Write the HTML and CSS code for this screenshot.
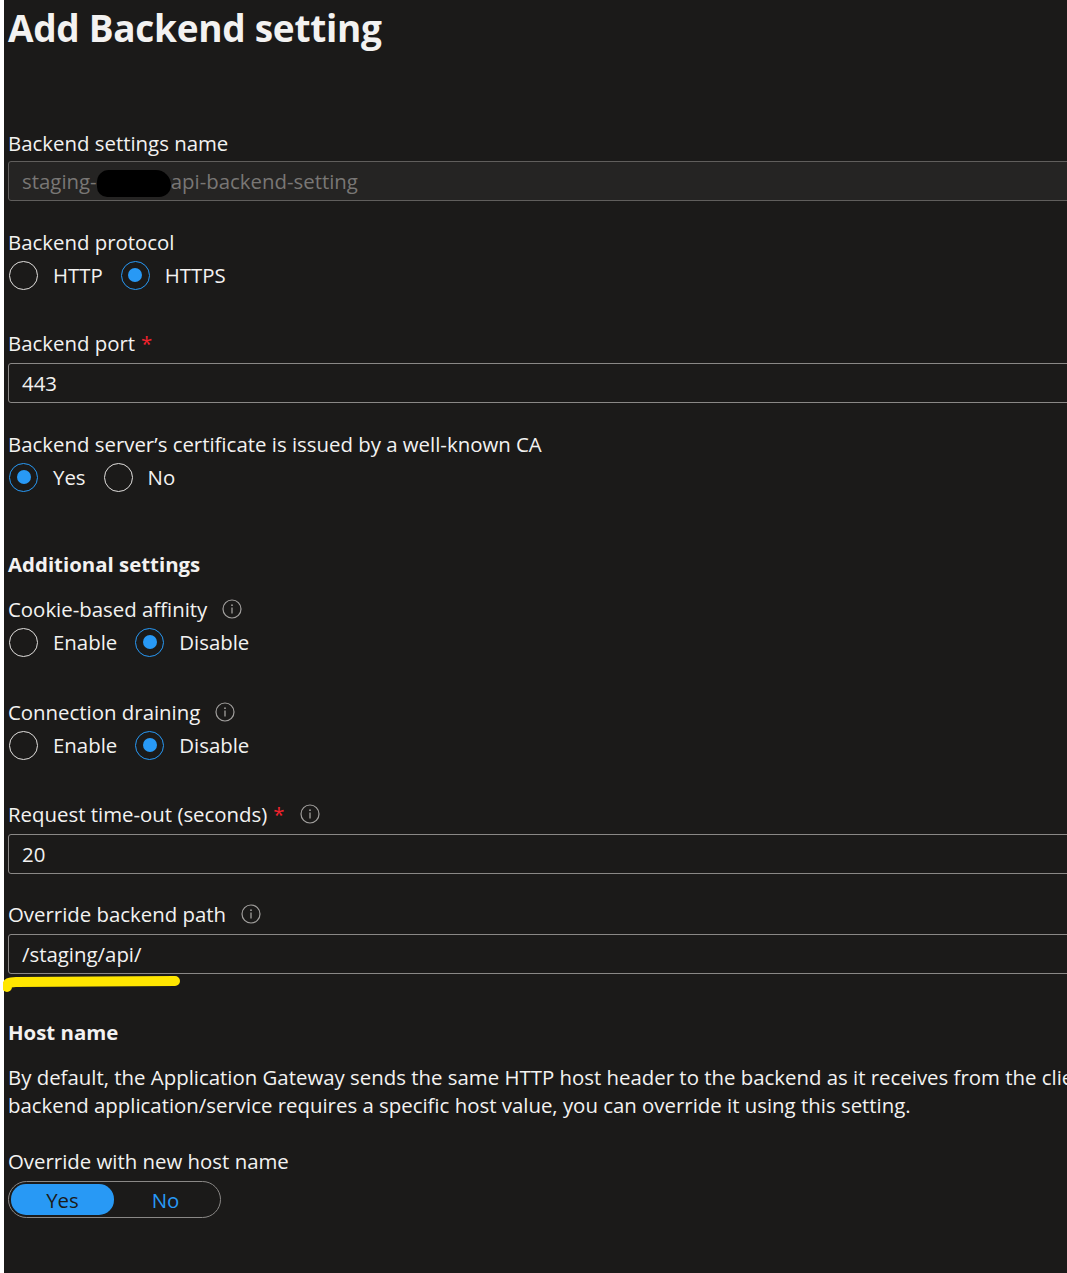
FILE: index.html
```html
<!DOCTYPE html>
<html>
<head>
<meta charset="utf-8">
<link rel="stylesheet" href="styles.css">
</head>
<body>
<div class="page">
  <h1 class="title">Add Backend setting</h1>

  <div class="label first">Backend settings name</div>
  <div class="input disabled first-input"><span>staging-</span><span class="redact"></span><span>api-backend-setting</span></div>

  <div class="label gap-l">Backend protocol</div>
  <div class="radios">
    <span class="radio"></span><span class="rtext">HTTP</span>
    <span class="radio on"></span><span class="rtext">HTTPS</span>
  </div>

  <div class="label gap-xl">Backend port <span class="req">*</span></div>
  <div class="input">443</div>

  <div class="label gap-l">Backend server’s certificate is issued by a well-known CA</div>
  <div class="radios">
    <span class="radio on"></span><span class="rtext">Yes</span>
    <span class="radio"></span><span class="rtext">No</span>
  </div>

  <div class="heading">Additional settings</div>

  <div class="label gap-s">Cookie-based affinity <svg class="info" viewBox="0 0 20 20"><circle cx="10" cy="10" r="9" fill="none" stroke="#a19f9d" stroke-width="1.2"/><circle cx="10" cy="6.2" r="0.9" fill="#a19f9d"/><path d="M10 8.6v6" stroke="#a19f9d" stroke-width="1.3"/></svg></div>
  <div class="radios">
    <span class="radio"></span><span class="rtext">Enable</span>
    <span class="radio on"></span><span class="rtext">Disable</span>
  </div>

  <div class="label gap-xxxl">Connection draining <svg class="info" viewBox="0 0 20 20"><circle cx="10" cy="10" r="9" fill="none" stroke="#a19f9d" stroke-width="1.2"/><circle cx="10" cy="6.2" r="0.9" fill="#a19f9d"/><path d="M10 8.6v6" stroke="#a19f9d" stroke-width="1.3"/></svg></div>
  <div class="radios">
    <span class="radio"></span><span class="rtext">Enable</span>
    <span class="radio on"></span><span class="rtext">Disable</span>
  </div>

  <div class="label gap-xxl">Request time-out (seconds) <span class="req">*</span> <svg class="info" viewBox="0 0 20 20"><circle cx="10" cy="10" r="9" fill="none" stroke="#a19f9d" stroke-width="1.2"/><circle cx="10" cy="6.2" r="0.9" fill="#a19f9d"/><path d="M10 8.6v6" stroke="#a19f9d" stroke-width="1.3"/></svg></div>
  <div class="input">20</div>

  <div class="label gap-k">Override backend path <svg class="info" viewBox="0 0 20 20"><circle cx="10" cy="10" r="9" fill="none" stroke="#a19f9d" stroke-width="1.2"/><circle cx="10" cy="6.2" r="0.9" fill="#a19f9d"/><path d="M10 8.6v6" stroke="#a19f9d" stroke-width="1.3"/></svg></div>
  <div class="input marked">/staging/api/
    <svg class="highlight" viewBox="0 0 180 20"><path d="M4 14 C4 10 6 9 13 9 L172 8" fill="none" stroke="#ffe600" stroke-width="10" stroke-linecap="round"/></svg>
  </div>

  <div class="heading host">Host name</div>
  <p class="para">By default, the Application Gateway sends the same HTTP host header to the backend as it receives from the client. If your<br>backend application/service requires a specific host value, you can override it using this setting.</p>

  <div class="label gap-m">Override with new host name</div>
  <div class="toggle"><span class="opt sel">Yes</span><span class="opt">No</span></div>
</div>
</body>
</html>
```

FILE: styles.css
```css
html, body {
  margin: 0;
  padding: 0;
  background: #1b1a19;
  overflow: hidden;
}
.page {
  border-left: 4px solid #ffffff;
  padding-left: 4px;
  width: 1200px;
  min-height: 1273px;
  box-sizing: border-box;
  color: #f3f2f1;
  font-family: "Open Sans", "Noto Sans", sans-serif;
  font-size: 20.4px;
}
.title {
  margin: 0;
  font-size: 37px;
  font-weight: 700;
  line-height: 56px;
  letter-spacing: -0.3px;
}
.label {
  line-height: 28px;
  height: 28px;
  display: flex;
  align-items: center;
  white-space: nowrap;
}
.first { margin-top: 73px; }
.gap-s { margin-top: 17px; }
.gap-m { margin-top: 28px; }
.gap-k { margin-top: 26px; }
.gap-l { margin-top: 27px; }
.gap-xl { margin-top: 39px; }
.gap-xxl { margin-top: 40px; }
.gap-xxxl { margin-top: 41px; }
.req { color: #f1222d; margin-left: 6px; }
.info { width: 20px; height: 20px; margin-left: 15px; }
.input {
  position: relative;
  margin-top: 6px;
  height: 40px;
  box-sizing: border-box;
  border: 1px solid #8a8886;
  border-radius: 3px;
  padding: 0 13px;
  display: flex;
  align-items: center;
  white-space: nowrap;
}
.input.first-input { margin-top: 4px; }
.input.disabled {
  background: #252423;
  border-color: #605e5c;
  color: #797775;
}
.redact {
  display: inline-block;
  width: 74px;
  height: 27px;
  background: #000;
  border-radius: 14px 18px 14px 12px;
  margin-top: 4px;
}
.radios {
  margin-top: 4px;
  height: 30px;
  display: flex;
  align-items: center;
}
.radio {
  width: 29px;
  height: 29px;
  box-sizing: border-box;
  border: 1.5px solid #e1dfdd;
  border-radius: 50%;
  margin-left: 1px;
  display: flex;
  align-items: center;
  justify-content: center;
}
.radio.on { border-color: #2899f5; }
.radio.on::after {
  content: "";
  width: 14px;
  height: 14px;
  border-radius: 50%;
  background: #2899f5;
}
.rtext { margin-left: 15px; margin-right: 17px; }
.heading {
  margin-top: 58px;
  font-weight: 700;
  line-height: 28px;
}
.host { margin-top: 44px; }
.para {
  margin: 17px 0 0;
  line-height: 28px;
  white-space: nowrap;
}
.highlight {
  position: absolute;
  left: -6px;
  top: 38px;
  width: 180px;
  height: 20px;
}
.toggle {
  margin-top: 6px;
  width: 213px;
  height: 37px;
  box-sizing: border-box;
  border: 1px solid #8a8886;
  border-radius: 19px;
  padding: 2px;
  display: flex;
}
.opt {
  width: 103px;
  border-radius: 15px;
  display: flex;
  align-items: center;
  justify-content: center;
  color: #2899f5;
}
.opt.sel {
  background: #2899f5;
  color: #1b1a19;
}
```
